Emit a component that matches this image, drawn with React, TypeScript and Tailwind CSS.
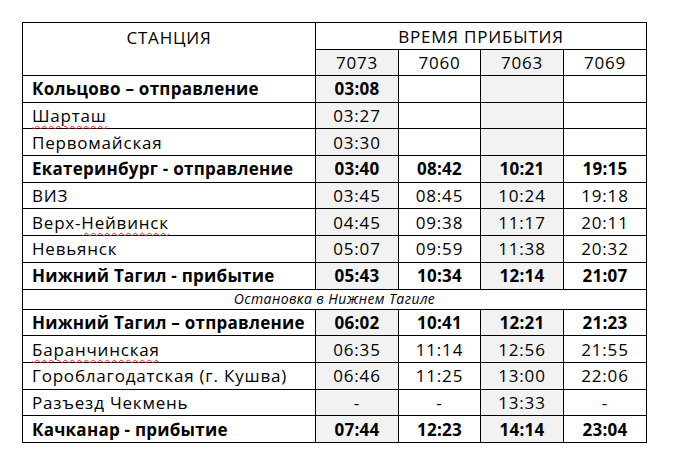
import React from "react";

type Row = {
  station: React.ReactNode;
  times: string[];
  bold?: boolean;
};

const squiggle = "underline decoration-wavy decoration-[#e02020] decoration-[1px] underline-offset-[3px]";

const before: Row[] = [
  { station: "Кольцово – отправление", times: ["03:08", "", "", ""], bold: true },
  { station: <span className={squiggle}>Шарташ</span>, times: ["03:27", "", "", ""] },
  { station: "Первомайская", times: ["03:30", "", "", ""] },
  { station: "Екатеринбург - отправление", times: ["03:40", "08:42", "10:21", "19:15"], bold: true },
  { station: "ВИЗ", times: ["03:45", "08:45", "10:24", "19:18"] },
  {
    station: (
      <>
        Верх-<span className={squiggle}>Нейвинск</span>
      </>
    ),
    times: ["04:45", "09:38", "11:17", "20:11"],
  },
  { station: "Невьянск", times: ["05:07", "09:59", "11:38", "20:32"] },
  { station: "Нижний Тагил - прибытие", times: ["05:43", "10:34", "12:14", "21:07"], bold: true },
];

const after: Row[] = [
  { station: "Нижний Тагил – отправление", times: ["06:02", "10:41", "12:21", "21:23"], bold: true },
  { station: <span className={squiggle}>Баранчинская</span>, times: ["06:35", "11:14", "12:56", "21:55"] },
  { station: "Гороблагодатская (г. Кушва)", times: ["06:46", "11:25", "13:00", "22:06"] },
  { station: "Разъезд Чекмень", times: ["-", "-", "13:33", "-"] },
  { station: "Качканар - прибытие", times: ["07:44", "12:23", "14:14", "23:04"], bold: true },
];

const trains = ["7073", "7060", "7063", "7069"];
const shaded = [true, false, true, false];

function TimeRow({ row }: { row: Row }) {
  return (
    <tr className={`h-[26.7px] ${row.bold ? "font-bold tracking-[0.25px]" : "tracking-[0.8px]"}`}>
      <td className="border border-black pl-[9px] text-left align-middle">{row.station}</td>
      {row.times.map((t, i) => (
        <td
          key={i}
          className={`border border-black text-center align-middle ${shaded[i] ? "bg-[#f2f2f2]" : "bg-white"}`}
        >
          {t}
        </td>
      ))}
    </tr>
  );
}

export default function App() {
  return (
    <div className="w-[673px] h-[463px] bg-white pt-[22px] pl-[22px] font-['Open_Sans',sans-serif] text-[17px] tracking-[0.8px] text-black leading-none">
      <table className="border-collapse table-fixed w-[624px]">
        <colgroup>
          <col className="w-[293px]" />
          <col className="w-[83px]" />
          <col className="w-[82px]" />
          <col className="w-[83px]" />
          <col className="w-[83px]" />
        </colgroup>
        <thead>
          <tr className="h-[27px]">
            <td rowSpan={2} className="border border-black text-center align-top pt-[6px]">
              СТАНЦИЯ
            </td>
            <td colSpan={4} className="border border-black text-center align-middle">
              ВРЕМЯ ПРИБЫТИЯ
            </td>
          </tr>
          <tr className="h-[26px]">
            {trains.map((t, i) => (
              <td
                key={t}
                className={`border border-black text-center align-middle ${shaded[i] ? "bg-[#f2f2f2]" : "bg-white"}`}
              >
                {t}
              </td>
            ))}
          </tr>
        </thead>
        <tbody>
          {before.map((r, i) => (
            <TimeRow key={i} row={r} />
          ))}
          <tr className="h-[20px]">
            <td colSpan={5} className="border border-black text-center align-middle italic text-[14px] tracking-[0.4px]">
              Остановка в Нижнем Тагиле
            </td>
          </tr>
          {after.map((r, i) => (
            <TimeRow key={i} row={r} />
          ))}
        </tbody>
      </table>
    </div>
  );
}
